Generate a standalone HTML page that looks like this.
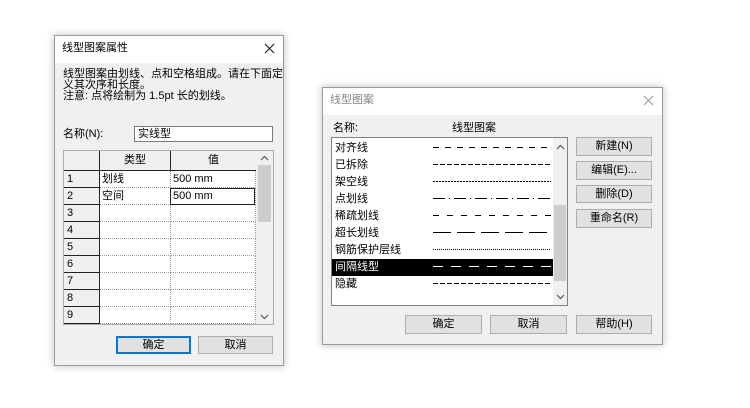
<!DOCTYPE html>
<html><head><meta charset="utf-8"><style>
*{margin:0;padding:0;box-sizing:border-box}
body{width:750px;height:408px;background:#fff;position:relative;overflow:hidden;font-family:"Liberation Sans","Noto Sans CJK SC",sans-serif;font-size:11px;color:#000}
.a{position:absolute}
.dlg{position:absolute;background:#f0f0f0;border:1px solid #9a9a9a;box-shadow:0 0 8px rgba(0,0,0,.25)}
.tb{position:absolute;left:0;top:0;right:0;background:#fff}
.btn{position:absolute;background:#e1e1e1;border:1px solid #adadad;text-align:center;line-height:16px;font-size:11px}
.t{position:absolute;white-space:nowrap;line-height:13px}
.cell{position:absolute;border-right:1px dotted #999;border-bottom:1px dotted #999;background:#fff}
.rh{position:absolute;background:#f0f0f0;border-bottom:1px solid #222;border-right:1px solid #222;padding-left:3px;line-height:16px}
</style></head><body>

<div class="dlg" style="left:54px;top:35px;width:230px;height:331px">
  <div class="tb" style="height:27px"></div>
</div>
<div class="t" style="left:62px;top:42px">线型图案属性</div>
<svg class="a" style="left:264px;top:43px" width="11" height="11"><path d="M1 1L10 10M10 1L1 10" stroke="#222" stroke-width="1.2"/></svg>
<div class="t" style="left:63px;top:69px;line-height:11px">线型图案由划线、点和空格组成。请在下面定<br>义其次序和长度。<br>注意: 点将绘制为 1.5pt 长的划线。</div>
<div class="t" style="left:63px;top:128px">名称(N):</div>
<div class="a" style="left:134px;top:126px;width:139px;height:16px;background:#fff;border:1px solid #7a7a7a;padding-left:3px;line-height:14px">实线型</div>

<div class="a" style="left:63px;top:150px;width:211px;height:175px;background:#fff;border:1px solid #aaa"></div>
<div class="a" style="left:64px;top:151px;width:36px;height:20px;background:#f0f0f0;border-right:1px solid #222;border-bottom:1px solid #222"></div>
<div class="a" style="left:100px;top:151px;width:71px;height:20px;background:#f0f0f0;border-right:1px solid #222;border-bottom:1px solid #222;text-align:center;line-height:19px">类型</div>
<div class="a" style="left:171px;top:151px;width:85px;height:20px;background:#f0f0f0;border-bottom:1px solid #222;text-align:center;line-height:19px">值</div>
<div class="a" style="left:256px;top:151px;width:17px;height:173px;background:#f0f0f0"></div>
<div class="a" style="left:258px;top:165px;width:13px;height:57px;background:#cdcdcd"></div>
<svg class="a" style="left:260px;top:155px" width="9" height="6"><path d="M1 5L4.5 1.5L8 5" stroke="#555" fill="none" stroke-width="1.2"/></svg>
<svg class="a" style="left:260px;top:314px" width="9" height="6"><path d="M1 1L4.5 4.5L8 1" stroke="#555" fill="none" stroke-width="1.2"/></svg>

<div id="rows"></div>
<script>
var h='';var lbl=[['划线','500 mm'],['空间','500 mm']];
for(var i=0;i<9;i++){var y=171+i*17;
h+='<div class="rh" style="left:64px;top:'+y+'px;width:36px;height:17px">'+(i+1)+'</div>';
h+='<div class="cell" style="left:100px;top:'+y+'px;width:71px;height:17px;padding-left:2px;line-height:16px">'+(lbl[i]?lbl[i][0]:'')+'</div>';
h+='<div class="cell" style="left:171px;top:'+y+'px;width:85px;height:17px;padding-left:2px;line-height:16px">'+(lbl[i]?lbl[i][1]:'')+'</div>';}
h+='<div class="a" style="left:170px;top:188px;width:85px;height:17px;border:1px solid #222"></div>';
document.getElementById('rows').outerHTML=h;
</script>
<div class="btn" style="left:116px;top:336px;width:75px;height:18px;border:1px solid #0078d7;box-shadow:inset 0 0 0 1px #0078d7">确定</div>
<div class="btn" style="left:198px;top:336px;width:75px;height:18px">取消</div>

<div class="dlg" style="left:322px;top:87px;width:341px;height:258px">
  <div class="tb" style="height:27px"></div>
</div>
<div class="t" style="left:330px;top:94px;color:#888">线型图案</div>
<svg class="a" style="left:643px;top:95px" width="11" height="11"><path d="M1 1L10 10M10 1L1 10" stroke="#999" stroke-width="1.1"/></svg>
<div class="t" style="left:333px;top:122px">名称:</div>
<div class="t" style="left:452px;top:122px">线型图案</div>
<div class="a" style="left:331px;top:137px;width:237px;height:169px;background:#fff;border:1px solid #828282"></div>
<div class="a" style="left:553px;top:138px;width:14px;height:167px;background:#f0f0f0"></div>
<div class="a" style="left:554px;top:205px;width:12px;height:76px;background:#cdcdcd"></div>
<svg class="a" style="left:556px;top:144px" width="9" height="6"><path d="M1 5L4.5 1.5L8 5" stroke="#555" fill="none" stroke-width="1.2"/></svg>
<svg class="a" style="left:556px;top:294px" width="9" height="6"><path d="M1 1L4.5 4.5L8 1" stroke="#555" fill="none" stroke-width="1.2"/></svg>
<div class="a" style="left:332px;top:259px;width:221px;height:17px;background:#000"></div>
<div id="list"></div>
<script>
var n=['对齐线','已拆除','架空线','点划线','稀疏划线','超长划线','钢筋保护层线','间隔线型','隐藏'];
var d=['6px 6px','5px 2px','2px 1px','12px 4px 1px 4px','6px 8px','18px 6px','1px 1px','10px 8px','5px 2px'];
var h='';
for(var i=0;i<9;i++){var y=139+i*17;var c=i==7?'#fff':'#000';
h+='<div class="t" style="left:335px;top:'+(y+3)+'px;color:'+c+'">'+n[i]+'</div>';
var dd=d[i].split(' ');var tot=0;dd.forEach(function(v){tot+=parseInt(v)});
var segs=[];var pos=0;for(var k=0;k<dd.length;k++){var w=parseInt(dd[k]);if(k%2==0)segs.push('transparent '+pos+'px, '+c+' '+pos+'px, '+c+' '+(pos+w)+'px, transparent '+(pos+w)+'px');pos+=w;}
h+='<div class="a" style="left:433px;top:'+(y+8)+'px;width:118px;height:1px;background:repeating-linear-gradient(90deg,'+segs.join(',')+',transparent '+tot+'px)"></div>';}
document.getElementById('list').outerHTML=h;
</script>
<div class="btn" style="left:576px;top:137px;width:76px;height:19px">新建(N)</div>
<div class="btn" style="left:576px;top:161px;width:76px;height:19px">编辑(E)...</div>
<div class="btn" style="left:576px;top:185px;width:76px;height:18px">删除(D)</div>
<div class="btn" style="left:576px;top:209px;width:76px;height:19px">重命名(R)</div>
<div class="btn" style="left:405px;top:315px;width:77px;height:19px">确定</div>
<div class="btn" style="left:490px;top:315px;width:77px;height:19px">取消</div>
<div class="btn" style="left:576px;top:315px;width:76px;height:19px">帮助(H)</div>
</body></html>
